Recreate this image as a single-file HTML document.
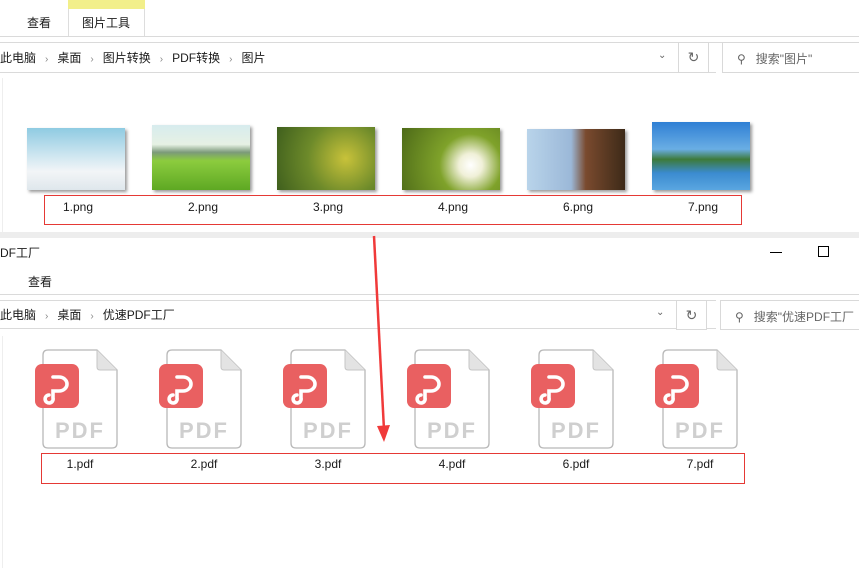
<!DOCTYPE html>
<html><head><meta charset="utf-8"><style>
*{margin:0;padding:0;box-sizing:border-box}
body{width:859px;height:568px;position:relative;overflow:hidden;background:#fff;font-family:"Liberation Sans","Noto Sans CJK SC",sans-serif;font-size:12px;color:#1a1a1a}
.a{position:absolute}
.hl{position:absolute;left:0;width:859px;height:1px;background:#dadada}
.crumb span.s{color:#888;margin:0 9px;font-size:10px}
.box{position:absolute;border:1px solid #d9d9d9;background:#fff}
.lbl{position:absolute;width:100px;text-align:center;font-size:12px}
.red{position:absolute;border:1px solid #e53935}
</style></head><body>
<!-- top window -->
<div class="a" style="left:68px;top:0;width:77px;height:9px;background:#f2ef8a"></div>
<div class="a" style="left:68px;top:9px;width:77px;height:28px;border-left:1px solid #ddd;border-right:1px solid #ddd;background:#fff"></div>
<div class="a" style="left:27px;top:14px">查看</div>
<div class="a" style="left:82px;top:14px">图片工具</div>
<div class="hl" style="top:36px"></div>
<div class="hl" style="top:42px"></div>
<div class="a crumb" style="left:0;top:49px">此电脑<span class="s">›</span>桌面<span class="s">›</span>图片转换<span class="s">›</span>PDF转换<span class="s">›</span>图片</div>
<div class="hl" style="top:72px;width:716px"></div>
<div class="a" style="left:658px;top:50px;color:#666;font-size:10px">⌄</div>
<div class="box" style="left:678px;top:42px;width:31px;height:31px;text-align:center;line-height:29px;color:#666;font-size:14px">↻</div>
<div class="box" style="left:722px;top:42px;width:140px;height:31px;color:#666;padding:7px 0 0 14px">⚲&nbsp;&nbsp;&nbsp;搜索"图片"</div>
<div class="a" style="left:2px;top:78px;width:1px;height:155px;background:#eee"></div>

<div class="a" style="left:27px;top:128px;width:98px;height:62px;background:linear-gradient(180deg,#8fcbe2 0%,#cfe6f0 45%,#f2f5f7 70%,#dfe7ec 100%);box-shadow:2px 2px 3px #999"></div>
<div class="a" style="left:152px;top:125px;width:98px;height:65px;background:linear-gradient(180deg,#d7ecee 0%,#e6f1e4 30%,#7c9a7a 42%,#8ccc3e 55%,#5ea823 100%);box-shadow:2px 2px 3px #999"></div>
<div class="a" style="left:277px;top:127px;width:98px;height:63px;background:radial-gradient(circle at 70% 50%,#c8c23a,#6d8a2a 50%,#3f5f1d);box-shadow:2px 2px 3px #999"></div>
<div class="a" style="left:402px;top:128px;width:98px;height:62px;background:radial-gradient(circle at 70% 60%,#fff 0,#f0f0d8 15%,#7fa22a 40%,#4d6a18 100%);box-shadow:2px 2px 3px #999"></div>
<div class="a" style="left:527px;top:129px;width:98px;height:61px;background:linear-gradient(90deg,#b9d4ea 0%,#9bb8d8 45%,#7a4a2e 60%,#3d2a18 100%);box-shadow:2px 2px 3px #999"></div>
<div class="a" style="left:652px;top:122px;width:98px;height:68px;background:linear-gradient(180deg,#2f7fd4 0%,#6aaee4 40%,#3d7a3a 55%,#3b8bd0 75%,#5aa6e0 100%);box-shadow:2px 2px 3px #999"></div>
<div class="red" style="left:44px;top:195px;width:698px;height:30px"></div>
<div class="lbl" style="left:28px;top:200px">1.png</div>
<div class="lbl" style="left:153px;top:200px">2.png</div>
<div class="lbl" style="left:278px;top:200px">3.png</div>
<div class="lbl" style="left:403px;top:200px">4.png</div>
<div class="lbl" style="left:528px;top:200px">6.png</div>
<div class="lbl" style="left:653px;top:200px">7.png</div>

<!-- bottom window -->
<div class="a" style="left:0;top:232px;width:859px;height:6px;background:#ededed"></div>
<div class="a" style="left:0;top:238px;width:859px;height:330px;background:#fff"></div>
<div class="a" style="left:0;top:244px">DF工厂</div>
<div class="a" style="left:770px;top:252px;width:12px;height:1px;background:#000"></div>
<div class="a" style="left:818px;top:246px;width:11px;height:11px;border:1px solid #000"></div>
<div class="a" style="left:28px;top:273px">查看</div>
<div class="hl" style="top:294px"></div>
<div class="hl" style="top:300px;width:716px"></div>
<div class="a crumb" style="left:0;top:306px">此电脑<span class="s">›</span>桌面<span class="s">›</span>优速PDF工厂</div>
<div class="hl" style="top:328px;width:716px"></div>
<div class="a" style="left:656px;top:307px;color:#666;font-size:10px">⌄</div>
<div class="box" style="left:676px;top:300px;width:31px;height:30px;text-align:center;line-height:28px;color:#666;font-size:14px">↻</div>
<div class="box" style="left:720px;top:300px;width:142px;height:30px;color:#666;padding:7px 0 0 14px;white-space:nowrap">⚲&nbsp;&nbsp;&nbsp;搜索"优速PDF工厂</div>
<div class="a" style="left:2px;top:336px;width:1px;height:232px;background:#eee"></div>

<svg class="a" style="left:0;top:340px" width="859" height="120">
<defs><g id="p">
<path d="M14 10 H63 L83 30 V103 Q83 108 78 108 H14 Q9 108 9 103 V15 Q9 10 14 10 Z" fill="#fff" stroke="#b8b8b8" stroke-width="1.3"/>
<path d="M63 10 V27 Q63 30 66 30 H83" fill="#e3e3e3" stroke="#c4c4c4"/>
<rect x="1" y="24" width="44" height="44" rx="7" fill="#e96061"/>
<path d="M19 37 H25 A8 7 0 0 1 25 51 H19 V58 A4 4 0 1 1 15 55" fill="none" stroke="#fff" stroke-width="3.6" stroke-linecap="round"/>
<text x="46" y="98" text-anchor="middle" font-family="Liberation Sans,sans-serif" font-size="22" font-weight="bold" fill="#cfcfcf" letter-spacing="2">PDF</text>
</g></defs>
<use href="#p" x="34"/><use href="#p" x="158"/><use href="#p" x="282"/><use href="#p" x="406"/><use href="#p" x="530"/><use href="#p" x="654"/>
</svg>
<div class="red" style="left:41px;top:453px;width:704px;height:31px"></div>
<div class="lbl" style="left:30px;top:457px">1.pdf</div>
<div class="lbl" style="left:154px;top:457px">2.pdf</div>
<div class="lbl" style="left:278px;top:457px">3.pdf</div>
<div class="lbl" style="left:402px;top:457px">4.pdf</div>
<div class="lbl" style="left:526px;top:457px">6.pdf</div>
<div class="lbl" style="left:650px;top:457px">7.pdf</div>

<svg class="a" style="left:360px;top:230px" width="40" height="220">
<path d="M14 6 L24 200" stroke="#f03a3a" stroke-width="2.5"/>
<path d="M17 196 L24 212 L30 195 Z" fill="#f03a3a"/>
</svg>
</body></html>
